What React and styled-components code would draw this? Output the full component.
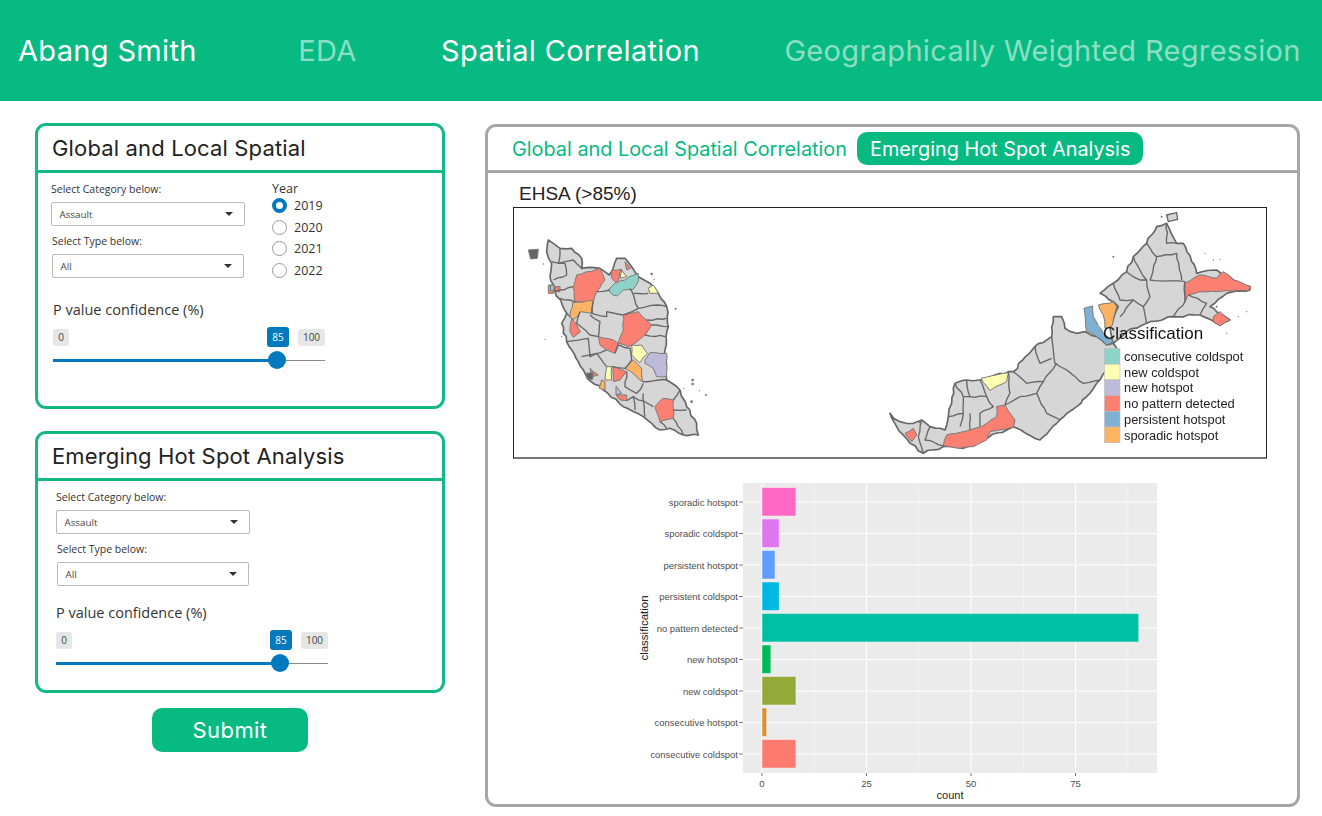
import styled, { createGlobalStyle } from "styled-components";

const GREEN = "#06ba82";
const BLUE = "#0079bf";

const Global = createGlobalStyle`
  body {
    margin: 0;
    background: #fff;
    font-family: "Open Sans", sans-serif;
  }
`;

const TopBar = styled.header`
  display: flex;
  align-items: center;
  height: 101px;
  padding-left: 18px;
  background: ${GREEN};
  font-family: Inter, sans-serif;
  font-size: 29px;
  letter-spacing: 0.33px;
  color: #fff;
  white-space: nowrap;
`;

const Brand = styled.div`
  margin-right: 101.5px;
`;

const Nav = styled.nav`
  display: flex;
  gap: 84.5px;
`;

const NavItem = styled.a`
  color: ${(p) => (p.$active ? "#fff" : "rgba(255, 255, 255, 0.55)")};
`;

const Main = styled.main`
  display: flex;
  align-items: flex-start;
  gap: 40px;
  padding: 22px 0 0 35px;
`;

const LeftColumn = styled.div`
  display: flex;
  flex-direction: column;
  width: 410px;
`;

const Card = styled.section`
  box-sizing: border-box;
  height: ${(p) => p.$height}px;
  margin-bottom: 22px;
  border: 3px solid #12b985;
  border-radius: 11px;
`;

const CardTitle = styled.h2`
  box-sizing: border-box;
  height: 47px;
  margin: 0;
  padding: 8px 0 0 14px;
  border-bottom: 3px solid #12b985;
  font-family: Inter, sans-serif;
  font-size: 22px;
  font-weight: 400;
  line-height: 28px;
  letter-spacing: 0.15px;
  color: #222;
`;

const CardBody = styled.div`
  display: flex;
  padding: ${(p) => p.$pad};
`;

const Selects = styled.div`
  width: 221px;
`;

const FieldLabel = styled.div`
  margin-left: ${(p) => p.$x || 0}px;
  font-size: 10.5px;
  line-height: 14px;
  color: #333;
`;

const SelectBox = styled.div`
  box-sizing: border-box;
  display: flex;
  align-items: center;
  justify-content: space-between;
  width: ${(p) => p.$w}px;
  height: 24px;
  margin: 6px 0 8px ${(p) => p.$x || 0}px;
  padding: 0 11px 0 7.5px;
  border: 1px solid #b9b9b9;
  border-radius: 2px;
  font-size: 9.8px;
  color: #444;
`;

const Caret = styled.span`
  width: 0;
  height: 0;
  border-left: 4px solid transparent;
  border-right: 4px solid transparent;
  border-top: 4px solid #333;
`;

const YearGroup = styled.div`
  font-size: 12.5px;
  color: #333;
`;

const YearTitle = styled.div`
  line-height: 13px;
`;

const YearRow = styled.div`
  display: flex;
  align-items: center;
  gap: 7px;
  height: 21.6px;
`;

const Radio = styled.span`
  box-sizing: border-box;
  width: 15px;
  height: 15px;
  border-radius: 50%;
  background: #fff;
  border: ${(p) => (p.$on ? `4px solid ${BLUE}` : "1px solid #999")};
`;

const SliderWrap = styled.div`
  width: 272px;
  margin: ${(p) => p.$margin};
`;

const SliderTitle = styled.div`
  font-size: 14.5px;
  line-height: 20px;
  color: #333;
`;

const Badges = styled.div`
  display: flex;
  align-items: center;
  margin-top: 7px;
`;

const Badge = styled.span`
  display: flex;
  align-items: center;
  justify-content: center;
  box-sizing: border-box;
  height: ${(p) => (p.$on ? 20 : 17)}px;
  width: ${(p) => p.$w}px;
  margin-left: ${(p) => p.$ml || 0}px;
  border-radius: 3px;
  font-size: 10px;
  color: ${(p) => (p.$on ? "#fff" : "#444")};
  background: ${(p) => (p.$on ? BLUE : "#e6e6e6")};
`;

const Track = styled.div`
  position: relative;
  height: 1px;
  margin-top: 13px;
  background: #888;
`;

const TrackFill = styled.div`
  height: 3px;
  margin-top: -1px;
  background: ${BLUE};
  position: absolute;
  left: 0;
`;

const Thumb = styled.span`
  position: absolute;
  top: -9px;
  width: 18px;
  height: 18px;
  margin-left: -9px;
  border-radius: 50%;
  background: ${BLUE};
`;

const SubmitButton = styled.button`
  align-self: flex-start;
  width: 156px;
  height: 44px;
  margin: -7px 0 0 117px;
  border: 0;
  border-radius: 10px;
  background: ${GREEN};
  color: #fff;
  font-family: Inter, sans-serif;
  font-size: 22px;
  letter-spacing: 0.4px;
`;

const Panel = styled.section`
  box-sizing: border-box;
  width: 815px;
  height: 683px;
  margin-top: 1px;
  border: 3px solid #a6a6a6;
  border-radius: 11px;
`;

const TabStrip = styled.div`
  display: flex;
  align-items: center;
  gap: 10.5px;
  box-sizing: border-box;
  height: 46px;
  padding-left: 24px;
  border-bottom: 3px solid #a6a6a6;
  font-family: Inter, sans-serif;
  font-size: 19.85px;
`;

const Tab = styled.div`
  box-sizing: border-box;
  height: 33px;
  line-height: 34px;
  padding: 0 ${(p) => (p.$active ? 12.5 : 0)}px;
  border-radius: 10px;
  color: ${(p) => (p.$active ? "#fff" : GREEN)};
  background: ${(p) => (p.$active ? GREEN : "transparent")};
`;

const MapTitle = styled.div`
  margin: 10px 0 2px 31px;
  font-family: "Liberation Sans", sans-serif;
  font-size: 19px;
  line-height: 22px;
  color: #222;
`;

const MapFrame = styled.div`
  box-sizing: border-box;
  width: 754px;
  height: 252px;
  margin-left: 25px;
  border: 1px solid #222;
  border-bottom: 2px solid #777;
`;

const Figure = styled.svg`
  display: block;
`;

const ChartFigure = styled(Figure)`
  margin: 16px 0 0 142px;
`;

const ChartText = styled.text`
  font-family: "Liberation Sans", sans-serif;
  font-size: ${(p) => p.$size}px;
  fill: ${(p) => p.$fill};
`;

const L = "#d6d6d6";
const RED = "#fb8072";
const TEAL = "#8dd3c7";
const YEL = "#ffffb3";
const LAV = "#bebada";
const STEEL = "#80b1d3";
const ORG = "#fdb462";

// small seeded wobble so the traced borders don't look like straight ruler lines
let seed = 7;
const wobble = (amp) => {
  seed = (seed * 16807) % 2147483647;
  return ((seed % 1000) / 500 - 1) * amp;
};

const roughen = (pts, closed = true, amp = 3.5) => {
  const list = pts.split(" ").map((p) => p.split(",").map(Number));
  const out = [];
  const last = closed ? list.length : list.length - 1;
  for (let i = 0; i < last; i++) {
    const [ax, ay] = list[i];
    const [bx, by] = list[(i + 1) % list.length];
    out.push(`${ax},${ay}`);
    const len = Math.hypot(bx - ax, by - ay);
    const steps = Math.floor(len / 14);
    for (let s = 1; s < steps; s++) {
      const t = s / steps;
      out.push(`${ax + (bx - ax) * t + wobble(amp)},${ay + (by - ay) * t + wobble(amp)}`);
    }
  }
  if (!closed) out.push(list[list.length - 1].join(","));
  return out.join(" ");
};

// peninsula, traced in zoomed coordinates (3x from 510,180)
const westShape = roughen(
  "115,180 130,190 150,205 185,205 215,235 215,265 270,265 298,285 320,235 345,235 385,290 420,310 445,340 470,380 475,440 465,510 470,600 510,630 530,680 560,730 565,765 520,765 480,745 450,750 400,710 340,680 280,630 230,590 220,570 170,485 155,430 170,400 135,335 120,290 125,250 110,215"
);

const westRegions = [
  [RED, "200,285 270,265 285,300 260,335 250,365 195,365 190,320"],
  [ORG, "188,368 250,362 248,400 212,395 192,418 180,412"],
  [RED, "185,415 205,445 212,455 190,472 180,455"],
  [TEAL, "295,330 320,305 345,300 358,290 385,280 385,305 370,328 340,330 322,348 308,345"],
  [RED, "305,270 335,268 320,310 305,295"],
  [YEL, "335,270 350,290 330,295"],
  [RED, "345,245 362,265 350,270"],
  [YEL, "415,325 430,315 445,340 420,340"],
  [RED, "340,405 385,395 410,420 425,435 405,465 375,490 355,500 325,490 340,450"],
  [RED, "265,470 310,480 325,490 315,520 290,510 270,495"],
  [YEL, "365,495 395,495 412,520 390,548 365,525"],
  [LAV, "405,540 420,518 470,520 470,590 440,590 430,565 405,550"],
  [ORG, "345,565 370,540 395,565 398,605 375,585"],
  [YEL, "290,560 305,560 305,600 285,600"],
  [RED, "310,560 350,575 330,600 310,605"],
  [RED, "240,565 265,585 245,590"],
  [ORG, "275,600 285,605 285,630 268,625"],
  [LAV, "318,618 335,640 318,645"],
  [RED, "318,645 350,645 350,662 330,660"],
  [RED, "435,680 460,655 490,660 490,715 450,725"],
  [RED, "115,315 130,315 130,340 115,340"],
  [TEAL, "122,315 132,315 132,332 122,332"],
  [RED, "135,320 150,320 150,335 135,335"],
  ["#666", "55,210 85,208 82,235 62,237"],
  ["#666", "228,580 250,578 248,598 232,598"],
].map(([fill, pts]) => [fill, roughen(pts, true, 2)]);

const westLines = [
  "125,245 165,250 170,285 130,300",
  "150,205 145,250 190,240 215,265",
  "135,335 190,320",
  "150,355 195,365",
  "170,400 180,410",
  "260,335 300,330",
  "360,325 385,385 340,405",
  "370,340 415,340",
  "385,385 440,375 470,380",
  "410,420 470,415",
  "425,435 475,440",
  "405,465 465,470",
  "250,365 245,400 290,410 290,395 340,405",
  "210,395 200,430 240,465 265,470",
  "240,405 270,425 265,470",
  "170,485 235,475 240,530 290,510",
  "215,530 260,520 290,560",
  "315,520 325,495 360,505 365,540 345,565 305,560",
  "398,605 470,600",
  "350,575 345,620 380,640 400,610",
  "350,662 370,650 430,680",
  "370,650 375,690",
  "400,640 405,710",
  "490,660 510,630",
  "490,690 530,690",
  "490,715 520,765",
  "450,725 470,745",
].map((pts) => roughen(pts, false, 2.5));

// borneo, traced in zoomed coordinates (3x from 880,200)
const eastSarawak = roughen(
  "30,640 60,665 100,670 125,660 150,680 195,690 205,650 215,610 225,550 260,540 300,540 385,515 400,515 465,440 515,410 520,350 545,350 555,385 590,400 615,395 650,410 680,435 700,430 710,445 680,510 660,540 620,590 590,620 540,660 480,720 400,680 380,690 300,720 250,745 190,740 130,760 90,730 50,680"
);

const eastSabah = roughen(
  "700,305 660,280 700,250 740,215 760,170 800,130 830,80 860,70 890,130 910,130 950,220 1010,210 1060,240 1110,260 1110,270 1040,280 990,320 1050,360 1020,375 960,345 880,350 800,370 740,395 700,430 690,380 715,320"
);

const eastRegions = [
  [RED, "915,250 960,225 1010,235 1030,215 1060,240 1112,260 1105,272 1040,272 960,275 925,285 915,305"],
  [RED, "1000,350 1020,335 1050,360 1020,378 1000,365"],
  [ORG, "655,315 700,305 710,320 695,380 675,385 670,345"],
  [STEEL, "612,325 638,318 640,350 670,400 700,425 680,435 650,410 620,395"],
  [YEL, "303,535 385,518 380,545 330,572"],
  [RED, "190,738 200,705 270,690 305,680 350,650 350,620 375,615 405,660 400,682 330,695 320,720 280,740 240,745"],
  [RED, "75,700 100,685 110,705 95,725"],
].map(([fill, pts]) => [fill, roughen(pts, true, 2)]);

const eastLines = [
  "465,440 480,490 515,475",
  "515,410 525,490 560,510 610,550 660,540",
  "400,515 440,550 490,545 530,490",
  "490,545 470,580 420,590 375,615",
  "470,580 500,640 540,660",
  "385,515 390,580 375,615",
  "225,550 250,590 250,640 205,650",
  "260,540 270,590 250,590",
  "300,540 320,590 270,590",
  "320,590 340,620 300,640 300,680",
  "250,640 240,680",
  "270,640 270,690",
  "125,660 115,710 130,760",
  "150,680 135,720 190,738",
  "720,350 760,300 790,320 800,370",
  "740,215 780,240 800,240 810,290 790,320",
  "760,170 780,210 800,240",
  "800,130 830,170 810,240 915,245 915,305 880,350",
  "830,170 890,160 905,240",
  "860,70 860,130 890,130",
  "960,345 980,310 925,285",
  "700,250 720,300 760,300",
].map((pts) => roughen(pts, false, 2.5));

const legendItems = [
  [TEAL, "consecutive coldspot"],
  [YEL, "new coldspot"],
  [LAV, "new hotspot"],
  [RED, "no pattern detected"],
  [STEEL, "persistent hotspot"],
  [ORG, "sporadic hotspot"],
];

const Specks = ({ points, fill = "#777" }) =>
  points.map(([x, y, r], i) => <circle key={i} cx={x} cy={y} r={r} fill={fill} />);

const MapChart = () => (
  <Figure width="752" height="249" viewBox="514 208 752 249">
    <defs>
      <filter id="soft" x="-5%" y="-5%" width="110%" height="110%">
        <feGaussianBlur stdDeviation="0.4" />
      </filter>
    </defs>
    <g filter="url(#soft)">
      <g transform="translate(510 180) scale(0.3333)" strokeLinejoin="round">
        <polygon points={westShape} fill={L} stroke="#666" strokeWidth="5" />
        {westRegions.map(([fill, pts], i) => (
          <polygon key={i} points={pts} fill={fill} stroke="#7a7a7a" strokeWidth="3" />
        ))}
        {westLines.map((pts, i) => (
          <polyline key={i} points={pts} fill="none" stroke="#666" strokeWidth="4" />
        ))}
        <Specks
          points={[
            [425, 282, 4], [433, 298, 2], [497, 386, 3], [548, 600, 4], [548, 612, 4], [522, 625, 2],
            [568, 632, 2], [588, 645, 3], [545, 665, 4], [100, 252, 2], [105, 478, 2], [155, 470, 2],
          ]}
        />
      </g>
      <g transform="translate(880 200) scale(0.3333)" strokeLinejoin="round">
        <polygon points={eastSarawak} fill={L} stroke="#666" strokeWidth="5" />
        <polygon points={eastSabah} fill={L} stroke="#666" strokeWidth="5" />
        {eastRegions.map(([fill, pts], i) => (
          <polygon key={i} points={pts} fill={fill} stroke="#777" strokeWidth="3" />
        ))}
        {eastLines.map((pts, i) => (
          <polyline key={i} points={pts} fill="none" stroke="#666" strokeWidth="4" />
        ))}
        <polygon points="860,45 890,38 893,58 865,65" fill={L} stroke="#666" strokeWidth="4" />
        <Specks
          points={[
            [845, 50, 3], [700, 170, 3], [975, 160, 2], [1000, 180, 2], [1020, 178, 2],
            [1010, 320, 3], [1075, 350, 2], [1100, 335, 2], [1040, 400, 2], [120, 665, 5],
          ]}
        />
      </g>
    </g>
    <ChartText x="1103" y="339" $size={17} $fill="#111">Classification</ChartText>
    {legendItems.map(([fill, label], i) => (
      <g key={label}>
        <rect x="1104.5" y={348.5 + i * 15.7} width="15.5" height="15.7" fill={fill} stroke="#bbb" strokeWidth="0.6" />
        <ChartText x="1124" y={361 + i * 15.7} $size={12.85} $fill="#222">{label}</ChartText>
      </g>
    ))}
  </Figure>
);

const bars = [
  ["sporadic hotspot", 8, "#ff68c4"],
  ["sporadic coldspot", 4, "#dd77f0"],
  ["persistent hotspot", 3, "#619cff"],
  ["persistent coldspot", 4, "#00b9e3"],
  ["no pattern detected", 90, "#00bfa5"],
  ["new hotspot", 2, "#00ba55"],
  ["new coldspot", 8, "#93aa38"],
  ["consecutive hotspot", 1, "#d39233"],
  ["consecutive coldspot", 8, "#fd7a6f"],
];

const rowY = (i) => 502 + i * 31.5;
const countX = (n) => 762 + n * 4.18;

const BarChart = () => (
  <ChartFigure width="540" height="330" viewBox="630 475 540 330">
    <rect x="743" y="483" width="414" height="290" fill="#ebebeb" />
    {[12.5, 37.5, 62.5, 87.5].map((n) => (
      <line key={n} x1={countX(n)} x2={countX(n)} y1="483" y2="773" stroke="#f4f4f4" strokeWidth="0.8" />
    ))}
    {[0, 25, 50, 75].map((n) => (
      <g key={n}>
        <line x1={countX(n)} x2={countX(n)} y1="483" y2="773" stroke="#fff" strokeWidth="1" />
        <line x1={countX(n)} x2={countX(n)} y1="773" y2="776" stroke="#555" strokeWidth="0.8" />
        <ChartText x={countX(n)} y="787" textAnchor="middle" $size={9.5} $fill="#4d4d4d">{n}</ChartText>
      </g>
    ))}
    {bars.map(([label, value, fill], i) => (
      <g key={label}>
        <line x1="743" x2="1157" y1={rowY(i)} y2={rowY(i)} stroke="#fff" strokeWidth="1" />
        <line x1="739" x2="743" y1={rowY(i)} y2={rowY(i)} stroke="#555" strokeWidth="0.8" />
        <ChartText x="738" y={rowY(i) + 3.5} textAnchor="end" $size={9.45} $fill="#4d4d4d">{label}</ChartText>
        <rect
          x="762"
          y={rowY(i) - 14.5}
          width={value * 4.18 + 0.5}
          height="28.5"
          fill={fill}
          stroke="#fff"
          strokeOpacity="0.45"
          strokeWidth="1"
        />
      </g>
    ))}
    <ChartText x="950" y="799" textAnchor="middle" $size={11} $fill="#222">count</ChartText>
    <ChartText
      x="0"
      y="0"
      transform="translate(648 628) rotate(-90)"
      textAnchor="middle"
      $size={11.5}
      $fill="#222"
    >
      classification
    </ChartText>
  </ChartFigure>
);

const Slider = ({ margin }) => (
  <SliderWrap $margin={margin}>
    <SliderTitle>P value confidence (%)</SliderTitle>
    <Badges>
      <Badge $w={16}>0</Badge>
      <Badge $w={22} $ml={198} $on>85</Badge>
      <Badge $w={27} $ml={9}>100</Badge>
    </Badges>
    <Track>
      <TrackFill style={{ width: `${(224 / 272) * 100}%` }} />
      <Thumb style={{ left: `${(224 / 272) * 100}%` }} />
    </Track>
  </SliderWrap>
);

const Select = ({ value, w, x }) => (
  <SelectBox $w={w} $x={x}>
    {value}
    <Caret />
  </SelectBox>
);

export default function App() {
  return (
    <>
      <Global />
      <TopBar>
        <Brand>Abang Smith</Brand>
        <Nav>
          <NavItem>EDA</NavItem>
          <NavItem $active>Spatial Correlation</NavItem>
          <NavItem>Geographically Weighted Regression</NavItem>
        </Nav>
      </TopBar>
      <Main>
        <LeftColumn>
          <Card $height={286}>
            <CardTitle>Global and Local Spatial</CardTitle>
            <CardBody $pad="9px 0 0 13px">
              <Selects>
                <FieldLabel>Select Category below:</FieldLabel>
                <Select value="Assault" w={194} />
                <FieldLabel $x={1}>Select Type below:</FieldLabel>
                <Select value="All" w={192} x={1} />
              </Selects>
              <YearGroup>
                <YearTitle>Year</YearTitle>
                {["2019", "2020", "2021", "2022"].map((year, i) => (
                  <YearRow key={year}>
                    <Radio $on={i === 0} />
                    {year}
                  </YearRow>
                ))}
              </YearGroup>
            </CardBody>
            <Slider margin="14px 0 0 15px" />
          </Card>
          <Card $height={262}>
            <CardTitle>Emerging Hot Spot Analysis</CardTitle>
            <CardBody $pad="9px 0 0 18px">
              <Selects>
                <FieldLabel>Select Category below:</FieldLabel>
                <Select value="Assault" w={194} />
                <FieldLabel $x={1}>Select Type below:</FieldLabel>
                <Select value="All" w={192} x={1} />
              </Selects>
            </CardBody>
            <Slider margin="9px 0 0 18px" />
          </Card>
          <SubmitButton>Submit</SubmitButton>
        </LeftColumn>
        <Panel>
          <TabStrip>
            <Tab>Global and Local Spatial Correlation</Tab>
            <Tab $active>Emerging Hot Spot Analysis</Tab>
          </TabStrip>
          <MapTitle>EHSA (&gt;85%)</MapTitle>
          <MapFrame>
            <MapChart />
          </MapFrame>
          <BarChart />
        </Panel>
      </Main>
    </>
  );
}
